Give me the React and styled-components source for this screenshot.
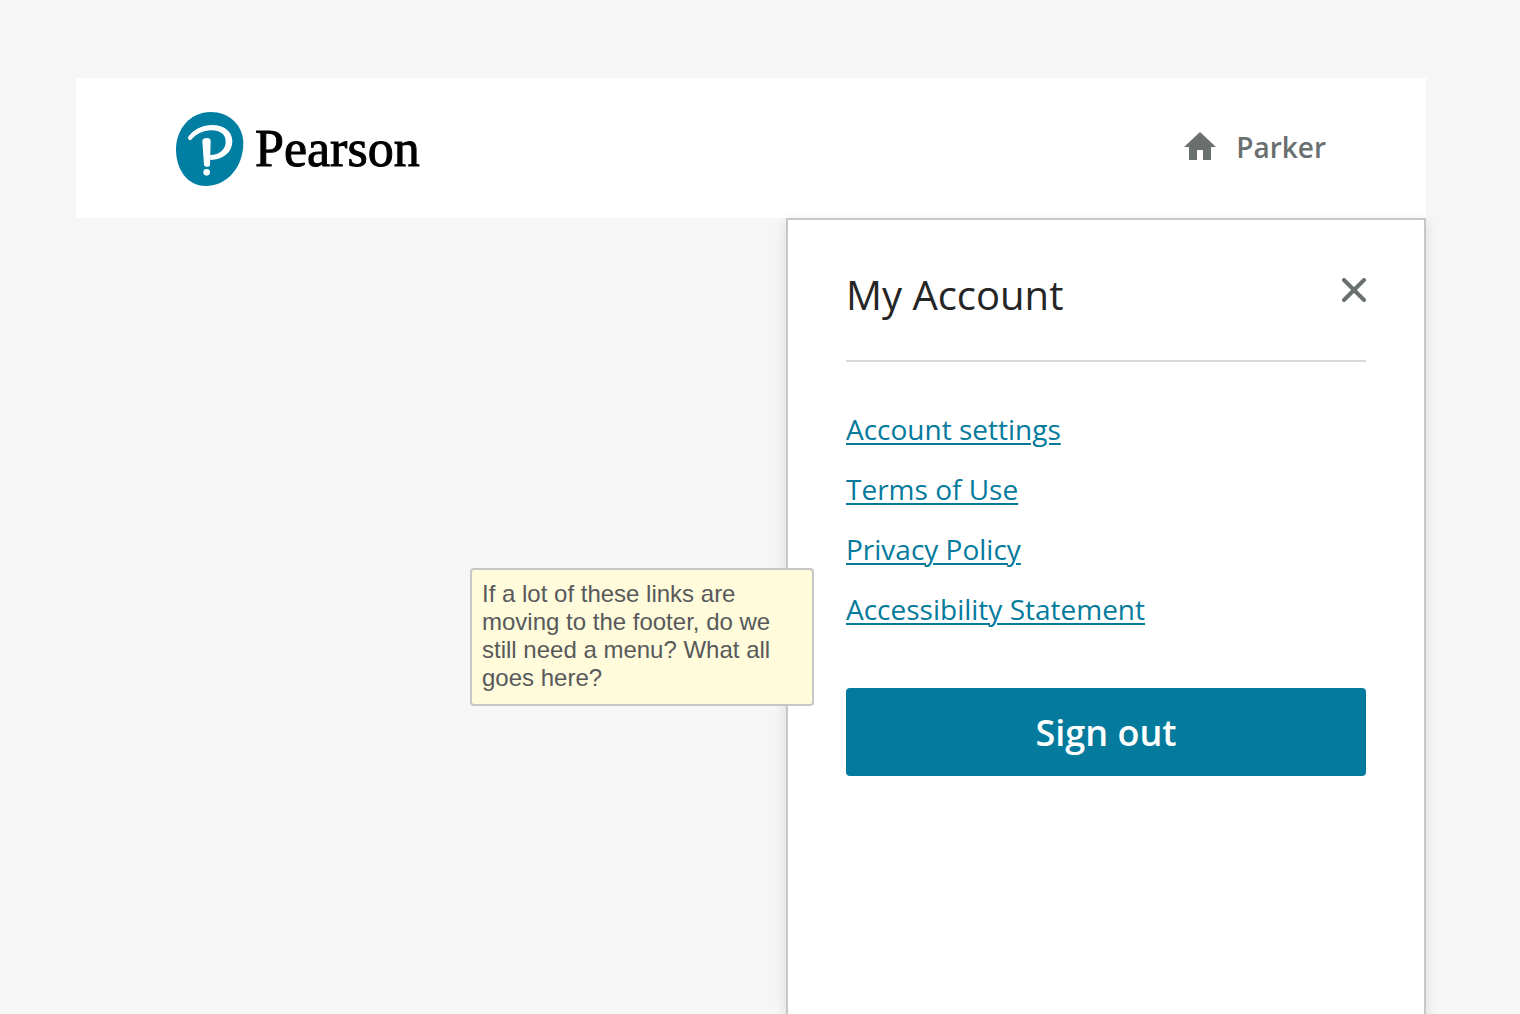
import React from "react";
import styled, { createGlobalStyle } from "styled-components";

const GlobalStyle = createGlobalStyle`
  *, *::before, *::after { box-sizing: border-box; }
  body {
    margin: 0;
    background: #f6f6f6;
    font-family: "Open Sans", "Noto Sans", sans-serif;
    color: #252525;
  }
`;

const Page = styled.div`
  display: flex;
  flex-direction: column;
  min-height: 100vh;
  padding: 78px 94px 0 76px;
`;

const Header = styled.header`
  display: flex;
  align-items: center;
  justify-content: space-between;
  height: 140px;
  padding: 0 100px;
  background: #fff;
`;

const Brand = styled.a`
  display: flex;
  align-items: center;
  gap: 11px;
  padding-top: 2px;
  color: #000;
  text-decoration: none;
  font-family: "Liberation Serif", "Times New Roman", serif;
  font-size: 52px;
  line-height: 74px;
  -webkit-text-stroke: 1px #000;
`;

const BrandMark = styled.svg`
  width: 68px;
  height: 74px;
  flex: none;
`;

const UserNav = styled.nav`
  display: flex;
  align-items: center;
  gap: 20px;
`;

const HomeLink = styled.a`
  display: flex;
  color: #6a7070;
`;

const UserButton = styled.button`
  padding: 0 0 2px;
  border: 0;
  background: none;
  color: #6a7070;
  font: 600 28px/38px "Open Sans", "Noto Sans", sans-serif;
  cursor: pointer;
`;

const Panel = styled.aside`
  position: relative;
  display: flex;
  flex: 1;
  flex-direction: column;
  align-self: flex-end;
  width: 640px;
  max-width: 100%;
  padding: 48px 58px 0;
  border: 2px solid #c7c7c7;
  border-bottom: 0;
  background: #fff;
  box-shadow: 0 4px 12px rgba(0, 0, 0, 0.12);
`;

const PanelHeader = styled.div`
  display: flex;
  align-items: flex-start;
  justify-content: space-between;
  padding: 0 0 38px;
  border-bottom: 2px solid #d9d9d9;
`;

const Title = styled.h1`
  margin: 0;
  font-size: 40px;
  font-weight: 400;
  line-height: 54px;
`;

const CloseButton = styled.button`
  display: flex;
  padding: 10px 0;
  border: 0;
  background: none;
  color: #6a7070;
  cursor: pointer;
`;

const LinkList = styled.ul`
  display: flex;
  flex-direction: column;
  gap: 22px;
  margin: 0;
  padding: 48px 0 60px;
  list-style: none;
  font-size: 28px;
  line-height: 38px;
`;

const TextLink = styled.a`
  color: #047a9c;
  text-decoration: underline;
  text-decoration-thickness: 2px;
  text-underline-offset: 3px;
`;

const SignOut = styled.button`
  height: 88px;
  padding: 2px 0 0;
  border: 0;
  border-radius: 4px;
  background: #047a9c;
  color: #fff;
  font: 600 36px/48px "Open Sans", "Noto Sans", sans-serif;
  cursor: pointer;
`;

const Note = styled.p`
  position: absolute;
  top: 348px;
  right: 610px;
  width: 344px;
  margin: 0;
  padding: 10px 10px 12px;
  border: 2px solid #c7c7c7;
  border-radius: 4px;
  background: #fffbdb;
  color: #58595b;
  font-family: "Liberation Sans", Arial, sans-serif;
  font-size: 24px;
  line-height: 28px;
`;

const links = ["Account settings", "Terms of Use", "Privacy Policy", "Accessibility Statement"];

export default function App() {
  return (
    <>
      <GlobalStyle />
      <Page>
        <Header>
          <Brand href="#home">
            <BrandMark viewBox="18 18 204 222" aria-hidden="true">
              <path
                fill="#007fa3"
                d="M122 18C176 18 220 57 220 112C220 180 174 240 107 240C50 240 18 189 18 130C18 69 61 18 122 18Z"
              />
              <path
                fill="none"
                stroke="#fff"
                strokeLinecap="round"
                strokeWidth="12"
                d="M60 96C75 76 99 65 124 65"
              />
              <path
                fill="#fff"
                d="M56 91C73 70 98 57 127 57C162 57 187 76 187 106C187 139 160 161 121 162L120 147C150 146 167 129 167 107C167 85 151 73 124 73C99 73 80 84 64 99Z"
              />
              <path
                fill="#fff"
                d="M97 105C97 99 103 96 110 96C117 96 122 98 122 105L120 177C120 184 103 184 102 177Z"
              />
              <circle cx="110" cy="199" r="10" fill="#fff" />
            </BrandMark>
            Pearson
          </Brand>
          <UserNav aria-label="User">
            <HomeLink href="#home" aria-label="Home">
              <svg width="32" height="32" viewBox="0 0 32 32" aria-hidden="true">
                <path fill="currentColor" d="M16 0L32 15H27V28H19V18H13V28H5V15H0Z" />
              </svg>
            </HomeLink>
            <UserButton type="button">Parker</UserButton>
          </UserNav>
        </Header>
        <Panel aria-label="My Account">
          <PanelHeader>
            <Title>My Account</Title>
            <CloseButton type="button" aria-label="Close">
              <svg width="24" height="24" viewBox="0 0 24 24" aria-hidden="true">
                <path stroke="currentColor" strokeWidth="4" strokeLinecap="round" d="M2 2L22 22M22 2L2 22" />
              </svg>
            </CloseButton>
          </PanelHeader>
          <LinkList>
            {links.map((label) => (
              <li key={label}>
                <TextLink href="#account">{label}</TextLink>
              </li>
            ))}
          </LinkList>
          <SignOut type="button">Sign out</SignOut>
          <Note>If a lot of these links are moving to the footer, do we still need a menu? What all goes here?</Note>
        </Panel>
      </Page>
    </>
  );
}
